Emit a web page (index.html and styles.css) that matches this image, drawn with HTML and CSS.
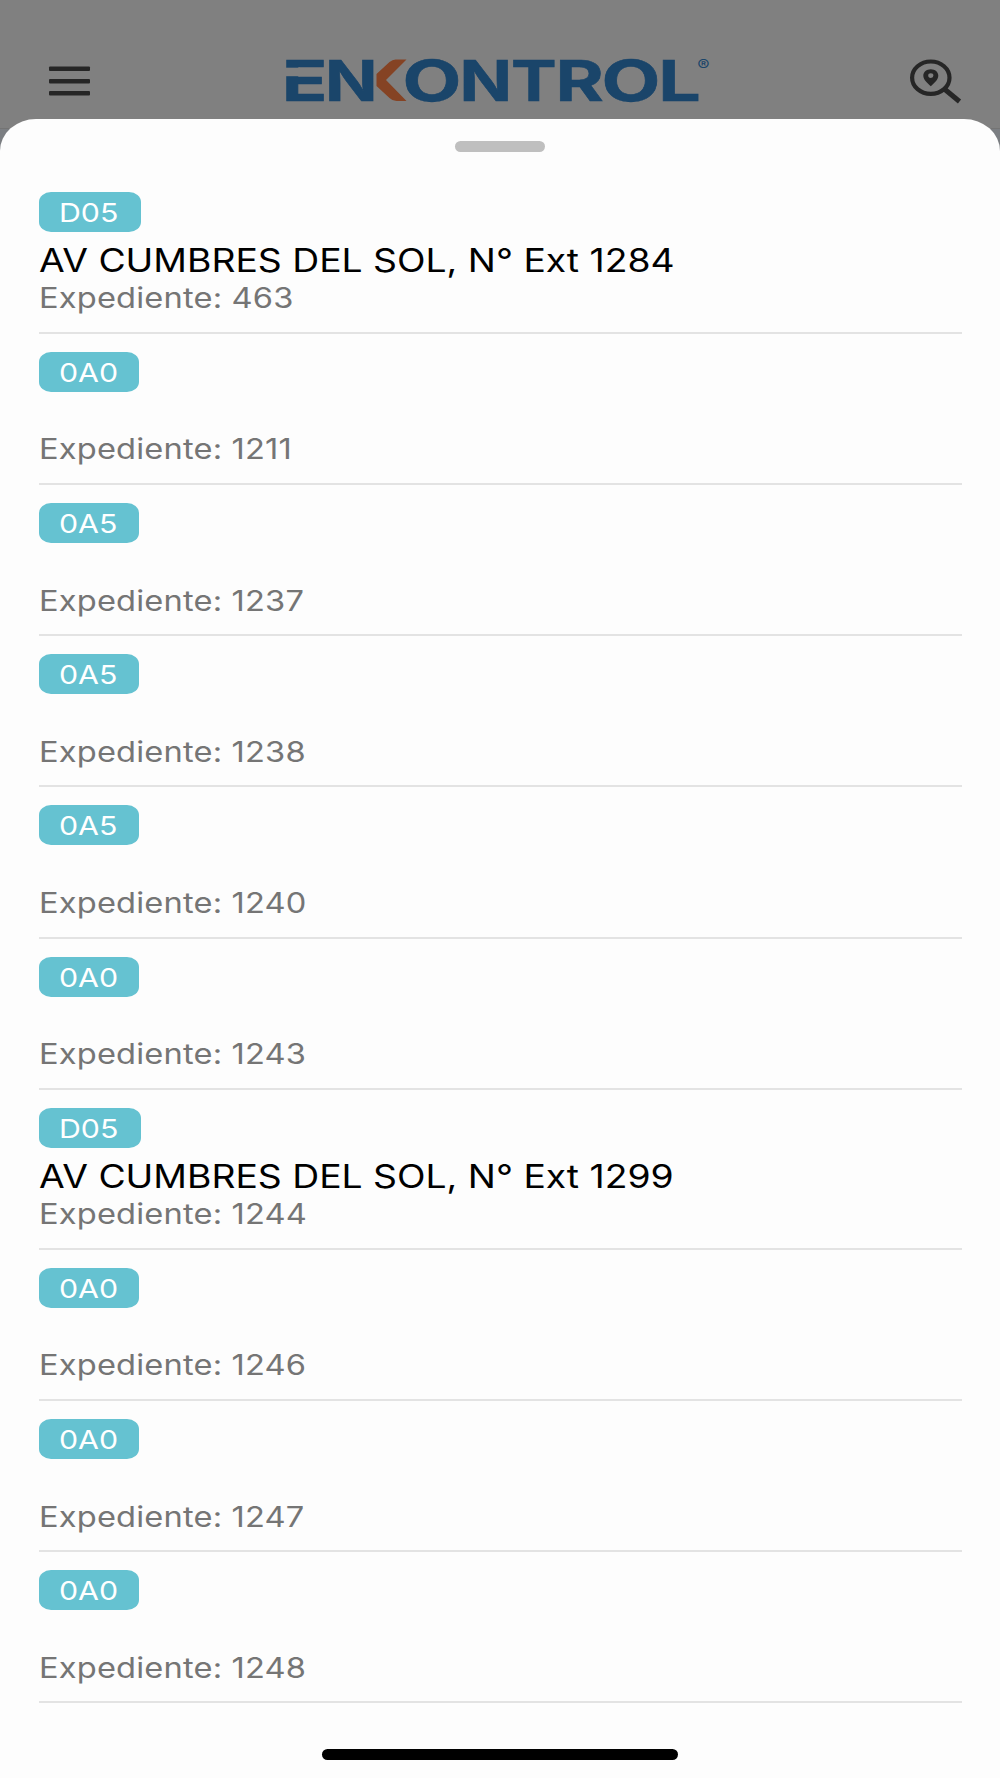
FILE: index.html
```html
<!DOCTYPE html>
<html lang="es">
<head>
<meta charset="utf-8">
<title>Enkontrol</title>
<link rel="stylesheet" href="styles.css">
</head>
<body>
<div class="screen">
  <header class="topbar">
    <svg class="menu" width="42" height="32" viewBox="0 0 42 32" aria-label="Menú">
      <rect x="0" y="1.4" width="41" height="4.6" rx="1"/>
      <rect x="0" y="13.9" width="41" height="4.6" rx="1"/>
      <rect x="0" y="26" width="41" height="4.6" rx="1"/>
    </svg>
    <svg class="logo" width="430" height="50" viewBox="0 0 430 50">
      <g class="logo-text">
        <text transform="translate(0.7 45) scale(1.32 1)">E</text>
        <text transform="translate(44.1 45) scale(1.21 1)">N</text>
        <text transform="translate(121.4 45) scale(1.34 1)">O</text>
        <text transform="translate(178.6 45) scale(1.21 1)">N</text>
        <text transform="translate(229.9 45) scale(1.2 1)">T</text>
        <text transform="translate(274.6 45) scale(1.29 1)">R</text>
        <text transform="translate(320.6 45) scale(1.34 1)">O</text>
        <text transform="translate(377.3 45) scale(1.32 1)">L</text>
      </g>
      <rect class="logo-cut" x="4" y="11.7" width="15" height="8.500"/>
      <path class="logo-k" d="M125.500 3.500H114.500Q111.500 3.500 108.500 6L95.500 18V30L108.500 42Q111.500 45 115.500 45H125.500L105 24Z"/>
      <text class="logo-reg" transform="translate(416.300 15.300) scale(1.15 1)">®</text>
    </svg>
    <svg class="search" width="52" height="46" viewBox="0 0 52 46" aria-label="Buscar ubicación">
      <ellipse class="lens" cx="20.800" cy="19.700" rx="18.700" ry="16.200"/>
      <path class="handle" d="M35 31.500L49.500 43.500"/>
      <path class="pin" fill-rule="evenodd" d="M20.800 11.300c-4.300 0-7.500 2.800-7.500 6.400c0 4.200 4.600 7.600 7.500 10.500c2.900-2.900 7.500-6.300 7.500-10.500c0-3.600-3.200-6.400-7.500-6.400zM20.800 15.300a2.600 2.300 0 1 1 0 4.600a2.600 2.300 0 1 1 0-4.600z"/>
    </svg>
  </header>
  <main class="sheet">
    <div class="grabber"></div>
    <ul class="list">
      <li class="row"><div class="badge badge-d"><span>D05</span></div><p class="address"><span>AV CUMBRES DEL SOL, N° Ext 1284</span></p><p class="file"><span>Expediente: 463</span></p></li>
      <li class="row"><div class="badge"><span>0A0</span></div><p class="address empty"></p><p class="file"><span>Expediente: 1211</span></p></li>
      <li class="row"><div class="badge"><span>0A5</span></div><p class="address empty"></p><p class="file"><span>Expediente: 1237</span></p></li>
      <li class="row"><div class="badge"><span>0A5</span></div><p class="address empty"></p><p class="file"><span>Expediente: 1238</span></p></li>
      <li class="row"><div class="badge"><span>0A5</span></div><p class="address empty"></p><p class="file"><span>Expediente: 1240</span></p></li>
      <li class="row"><div class="badge"><span>0A0</span></div><p class="address empty"></p><p class="file"><span>Expediente: 1243</span></p></li>
      <li class="row"><div class="badge badge-d"><span>D05</span></div><p class="address"><span>AV CUMBRES DEL SOL, N° Ext 1299</span></p><p class="file"><span>Expediente: 1244</span></p></li>
      <li class="row"><div class="badge"><span>0A0</span></div><p class="address empty"></p><p class="file"><span>Expediente: 1246</span></p></li>
      <li class="row"><div class="badge"><span>0A0</span></div><p class="address empty"></p><p class="file"><span>Expediente: 1247</span></p></li>
      <li class="row"><div class="badge"><span>0A0</span></div><p class="address empty"></p><p class="file"><span>Expediente: 1248</span></p></li>
    </ul>
    <div class="home"></div>
  </main>
</div>
</body>
</html>
```
FILE: styles.css
```css
* { box-sizing: border-box; }
body { margin: 0; font-family: Inter, "Liberation Sans", sans-serif; }
p, ul { margin: 0; padding: 0; list-style: none; }

.screen {
  width: 1000px;
  height: 1778px;
  display: flex;
  flex-direction: column;
  overflow: hidden;
  background: #7b7e82;
}

.topbar {
  flex: none;
  height: 129px;
  padding: 56px 38px 0 49px;
  display: flex;
  justify-content: space-between;
  align-items: flex-start;
  background: #808080;
  border-bottom: 1px solid #747474;
}
.topbar svg { display: block; overflow: visible; }
.menu { margin-top: 9px; fill: #262626; }
.logo { margin-right: 9px; }
.search { margin-top: 2px; }
.logo-text {
  fill: #1a456a;
  stroke: #1a456a;
  stroke-width: .6;
  font-size: 57px;
  font-weight: 700;
}
.logo-cut { fill: #808080; }
.logo-k { fill: #854324; }
.logo-reg { fill: #1a456a; font-size: 16px; font-weight: 400; }
.lens { fill: none; stroke: #262626; stroke-width: 4.2; }
.handle { stroke: #262626; stroke-width: 5; }
.pin { fill: #262626; }

.sheet {
  position: relative;
  flex: 1;
  margin-top: -10px;
  padding-top: 22px;
  display: flex;
  flex-direction: column;
  align-items: center;
  background: #fdfdfd;
  border-radius: 36px 36px 0 0 / 32px 32px 0 0;
}
.grabber {
  width: 90px;
  height: 11px;
  border-radius: 6px;
  background: #bfbfbf;
}

.list { width: 923px; margin-top: 21.8px; }
.row {
  padding: 18px 0 16.500px;
  border-bottom: 2px solid #e3e3e3;
}
.row span {
  display: inline-block;
  white-space: nowrap;
  transform: scaleX(1.165);
  transform-origin: 0 50%;
}
.badge {
  width: 100px;
  height: 40px;
  padding-left: 20px;
  border-radius: 12px / 10px;
  background: #65c2d1;
  color: #fff;
  font-size: 26px;
  line-height: 41px;
}
.badge-d { width: 102.500px; }
.address {
  height: 40px;
  margin-top: 9.500px;
  font-size: 32px;
  line-height: 40px;
  color: #000;
}
.address.empty { height: 31.200px; }
.file {
  height: 34px;
  font-size: 28px;
  line-height: 34px;
  letter-spacing: .15px;
  color: #757575;
}

.home {
  width: 356px;
  height: 11px;
  margin-top: 46px;
  border-radius: 6px;
  background: #000;
}
```
